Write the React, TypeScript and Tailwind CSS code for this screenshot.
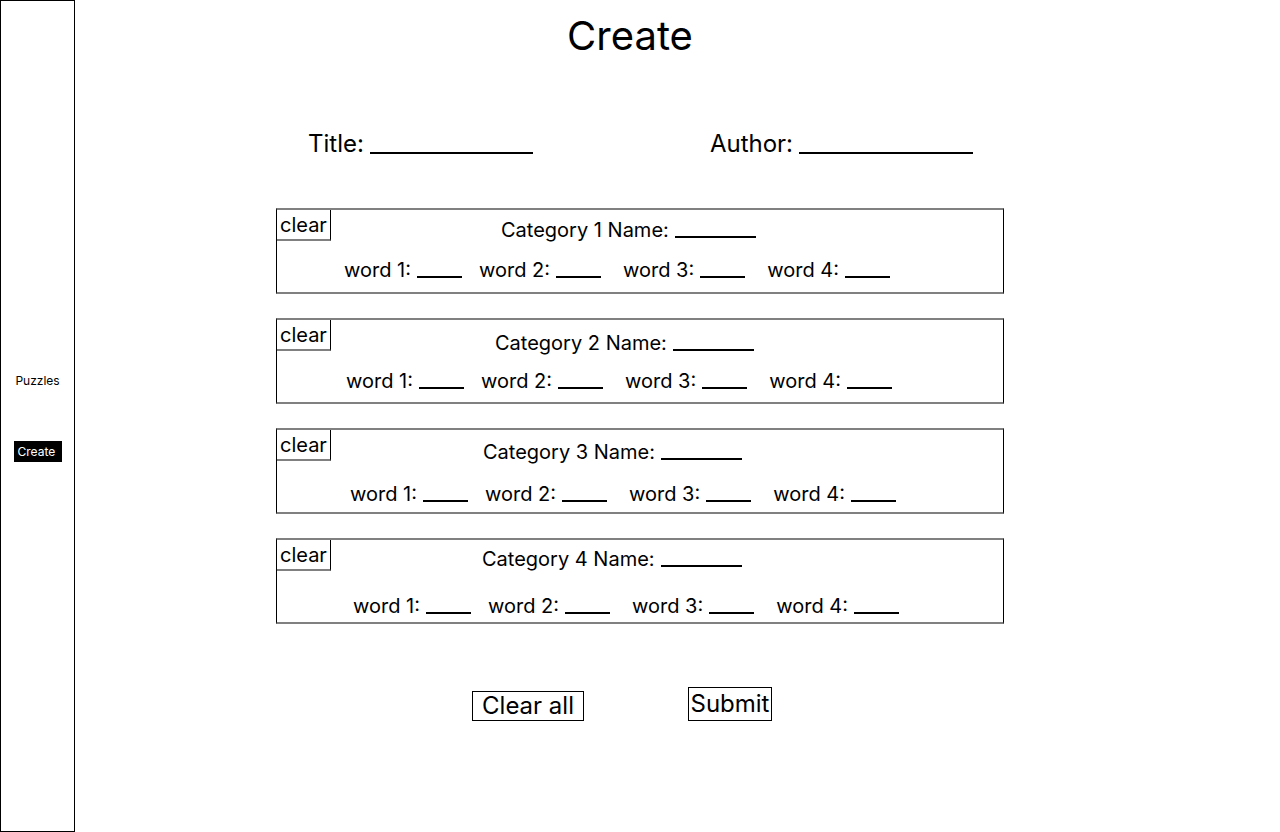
import { clsx } from "clsx";

type FieldProps = {
  id: string;
  label: string;
  inputClass: string;
  className?: string;
};

function Field({ id, label, inputClass, className }: FieldProps) {
  return (
    <div className={clsx("flex items-start gap-1.5", className)}>
      <label htmlFor={id} className="whitespace-nowrap">
        {label}
      </label>
      <input
        id={id}
        type="text"
        className={clsx("border-b-2 border-black bg-transparent p-0 outline-none", inputClass)}
      />
    </div>
  );
}

const categories = [
  { body: "pt-2 gap-4", name: "pl-[170px]", words: "pl-[13px]" },
  { body: "pt-[11px] gap-3.5", name: "pl-[164px]", words: "pl-[15px]" },
  { body: "pt-2.5 gap-4.5", name: "pl-[152px]", words: "pl-[19px]" },
  { body: "pt-[7px] gap-[23px]", name: "pl-[151px]", words: "pl-[22px]" },
];

const wordSpacing = ["mr-[17px]", "mr-[22px]", "mr-[22px]", ""];

function Category({ index }: { index: number }) {
  const style = categories[index];
  const n = index + 1;
  return (
    <section className="flex min-h-[86px] items-start border-x border-y-2 border-x-black border-y-[#808080] text-xl leading-6">
      <button
        type="button"
        className="h-[31px] w-[54px] shrink-0 border-r border-b-2 border-r-black border-b-[#808080] pl-[3px] text-left"
      >
        clear
      </button>
      <div className={clsx("flex flex-1 flex-col", style.body)}>
        <Field
          id={`category-${n}`}
          label={`Category ${n} Name:`}
          inputClass="h-5 w-[81px]"
          className={style.name}
        />
        <div className={clsx("flex", style.words)}>
          {wordSpacing.map((spacing, i) => (
            <Field
              key={i}
              id={`category-${n}-word-${i + 1}`}
              label={`word ${i + 1}:`}
              inputClass="h-5 w-[45px]"
              className={spacing}
            />
          ))}
        </div>
      </div>
    </section>
  );
}

export default function App() {
  return (
    <div className="flex min-h-screen bg-white font-['Inter',sans-serif] text-black">
      <nav className="flex w-[75px] shrink-0 flex-col items-center justify-center gap-[50px] border border-black text-xs">
        <a href="#puzzles" className="flex h-[21px] items-center">
          Puzzles
        </a>
        <a href="#create" className="flex h-[21px] w-12 items-center bg-black pl-1 text-white">
          Create
        </a>
      </nav>

      <main className="flex-1 pr-[75px]">
        <form className="mx-auto flex max-w-[728px] flex-col">
          <h1 className="pt-3 pr-5 text-center text-[40px] leading-12">Create</h1>

          <div className="flex gap-[177px] pt-[68px] pl-8 text-2xl leading-8">
            <Field id="title" label="Title:" inputClass="h-[26px] w-[163px]" />
            <Field id="author" label="Author:" inputClass="h-[26px] w-[174px]" />
          </div>

          <div className="flex flex-col gap-6 pt-12">
            {categories.map((_, i) => (
              <Category key={i} index={i} />
            ))}
          </div>

          <div className="flex items-end gap-[104px] pt-[63px] pl-49 text-2xl leading-7">
            <button type="button" className="h-[30px] w-28 border border-black">
              Clear all
            </button>
            <button type="submit" className="h-[34px] w-21 border border-black">
              Submit
            </button>
          </div>
        </form>
      </main>
    </div>
  );
}
